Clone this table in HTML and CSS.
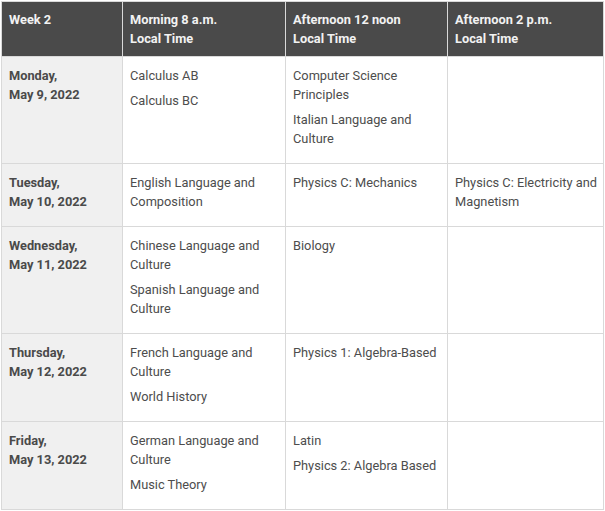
FILE: index.html
```html
<!DOCTYPE html>
<html>
<head>
<meta charset="utf-8">
<link rel="stylesheet" href="styles.css">
</head>
<body>
<table class="schedule">
  <colgroup>
    <col class="c1"><col class="c2"><col class="c3"><col class="c4">
  </colgroup>
  <thead>
    <tr>
      <th>Week 2</th>
      <th>Morning 8 a.m.<br>Local Time</th>
      <th>Afternoon 12 noon<br>Local Time</th>
      <th>Afternoon 2 p.m.<br>Local Time</th>
    </tr>
  </thead>
  <tbody>
    <tr>
      <td class="day">Monday,<br>May 9, 2022</td>
      <td><p>Calculus AB</p><p>Calculus BC</p></td>
      <td><p>Computer Science Principles</p><p>Italian Language and Culture</p></td>
      <td></td>
    </tr>
    <tr>
      <td class="day">Tuesday,<br>May 10, 2022</td>
      <td><p>English Language and Composition</p></td>
      <td><p>Physics C: Mechanics</p></td>
      <td><p>Physics C: Electricity and Magnetism</p></td>
    </tr>
    <tr>
      <td class="day">Wednesday,<br>May 11, 2022</td>
      <td><p>Chinese Language and Culture</p><p>Spanish Language and Culture</p></td>
      <td><p>Biology</p></td>
      <td></td>
    </tr>
    <tr>
      <td class="day">Thursday,<br>May 12, 2022</td>
      <td><p>French Language and Culture</p><p>World History</p></td>
      <td><p>Physics 1: Algebra-Based</p></td>
      <td></td>
    </tr>
    <tr>
      <td class="day">Friday,<br>May 13, 2022</td>
      <td><p>German Language and Culture</p><p>Music Theory</p></td>
      <td><p>Latin</p><p>Physics 2: Algebra Based</p></td>
      <td></td>
    </tr>
  </tbody>
</table>
</body>
</html>
```
FILE: styles.css
```css
html, body {
  margin: 0;
  padding: 0;
  background: #fff;
}
body {
  padding: 1px 0 0 1px;
  font-family: Roboto, "Liberation Sans", sans-serif;
  font-size: 12.8px;
  line-height: 19px;
  color: #4d4d4d;
}
.schedule {
  width: 602px;
  border-collapse: collapse;
  table-layout: fixed;
  border: 1px solid #d9d9d9;
}
.c1 { width: 121px; }
.c2 { width: 163px; }
.c3 { width: 162px; }
.c4 { width: 156px; }
.schedule th {
  background: #4a4a4a;
  color: #f2f2f2;
  font-weight: 700;
  text-align: left;
  vertical-align: top;
  padding: 8px 7px 8px 7px;
  border: 1px solid #d9d9d9;
  border-top: 0;
}
.schedule td {
  vertical-align: top;
  padding: 9px 4px 9px 7px;
  border: 1px solid #d9d9d9;
}
.schedule td p {
  margin: 0 0 6px 0;
}
.schedule td.day {
  background: #f0f0f0;
  font-weight: 700;
  color: #4a4a4a;
}
```
